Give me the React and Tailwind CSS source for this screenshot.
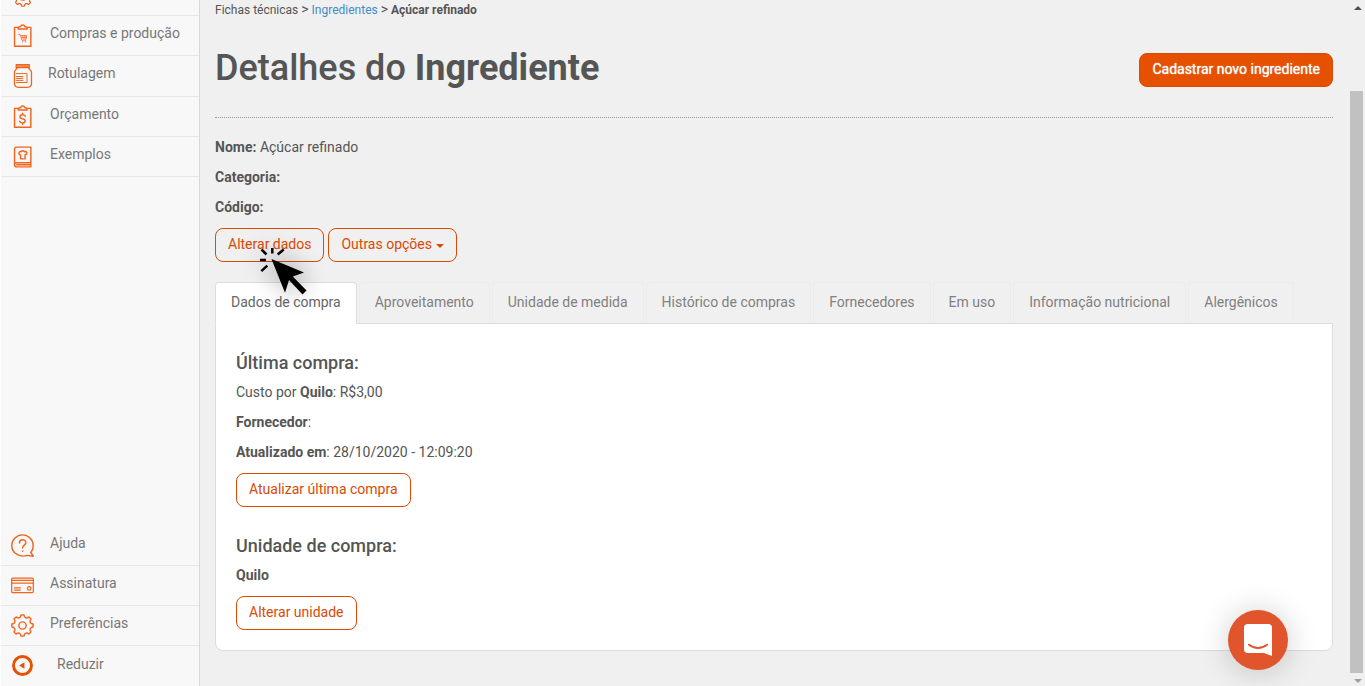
import clsx from 'clsx';

const stroke = {
  fill: 'none',
  stroke: 'currentColor',
  strokeLinecap: 'round',
  strokeLinejoin: 'round',
};

// Eight rounded teeth around a 24x24 box, joined by concave arcs
function gearPath() {
  const point = (radius, degrees) => {
    const rad = (degrees * Math.PI) / 180;
    return `${(12 + radius * Math.cos(rad)).toFixed(2)} ${(12 + radius * Math.sin(rad)).toFixed(2)}`;
  };

  let d = '';
  for (let a = 0; a < 360; a += 45) {
    d += a === 0 ? `M${point(9.4, a - 13)}` : `A2.6 2.6 0 0 0 ${point(9.4, a - 13)}`;
    d += `L${point(11.1, a - 8)}A11 11 0 0 1 ${point(11.1, a + 8)}L${point(9.4, a + 13)}`;
  }
  return `${d}A2.6 2.6 0 0 0 ${point(9.4, -13)}Z`;
}

const GEAR_PATH = gearPath();

function GearIcon({ size = 23 }) {
  return (
    <svg width={size} height={size} viewBox="0 0 24 24" strokeWidth="1.500" {...stroke}>
      <path d={GEAR_PATH} />
      <circle cx="12" cy="12" r="3.800" />
    </svg>
  );
}

function ClipboardIcon({ children }) {
  return (
    <svg width="23" height="23" viewBox="0 0 24 24" strokeWidth="1.500" {...stroke}>
      <path d="M7.500 3.500H3.700v19.800h17V3.500h-3.800" />
      <path d="M7.500 5.200V3.600l2.600-1c.4-2.200 3.700-2.200 4.100 0l2.700 1v1.600z" />
      {children}
    </svg>
  );
}

function CartClipboardIcon() {
  return (
    <ClipboardIcon>
      <path
        d="M8 10.800h1.400l2 6.200h4.200M10.200 12h6.200l-.9 4.200M12.300 12.300l.4 3.700M14.500 12.300V16M11 14h5"
        strokeWidth="1"
        opacity="0.800"
      />
      <path d="M12 18.600h.1M15 18.600h.1" strokeWidth="1.200" />
    </ClipboardIcon>
  );
}

function MoneyClipboardIcon() {
  return (
    <ClipboardIcon>
      <path d="M15 11.600c-.8-1.200-1.800-1.500-2.900-1.500-3.400 0-3.700 3.500-.4 4.200 4.200.7 4 4.400.5 4.400-1.500 0-2.600-.7-3.200-1.700M12.100 8.600v1.500M12.100 18.700v1.500" />
    </ClipboardIcon>
  );
}

function JarIcon() {
  return (
    <svg width="24" height="24" viewBox="0 0 24 24" strokeWidth="1.300" {...stroke}>
      <path d="M5.200.7h13.100v3H5.200zM5.200 2.200h13.100" />
      <path d="M6.200 3.700C5.500 5.500 3.500 6 3.500 8.500v10.800c0 2.700 1.700 4 4 4H16.500c2.300 0 4-1.300 4-4V8.500c0-2.500-2.300-3-3-4.800" />
      <path d="M5.500 9.600H16v8.900H5.500M5.500 12.500h6.500M5.500 14.400h6.500M5.500 16.400h6.500" strokeWidth="1" />
    </svg>
  );
}

function BookIcon() {
  return (
    <svg width="23" height="23" viewBox="0 0 24 24" strokeWidth="1.500" {...stroke}>
      <path d="M20.700 18.500V2.200H6c-1.500 0-2.300.8-2.300 2.300v16c0 1.600.9 2.300 2.300 2.300h14.700v-4.300H6c-1.400 0-2.300.7-2.300 1.700M6 20.700h14" />
      <path d="M10 10.300c-3.100-.5-1.500-4.300.8-3.300.7-1.300 2.500-1.300 3.200 0 2.400-1 3.700 2.800.7 3.300V14.500H10z" />
    </svg>
  );
}

function HelpIcon() {
  return (
    <svg width="23" height="23" viewBox="0 0 24 24" strokeWidth="1.500" {...stroke}>
      <path d="M23.200 23.200l-6.300-.9C10 24.800.8 20.500.8 12.200.8 5.900 5.900.9 12 .9s11.200 5 11.200 11.300c0 3-1 5.200-2.500 7.100z" />
      <path d="M8.800 9.300c0-4.300 6.700-4.200 6.700-.2 0 2.400-3.400 2.700-3.400 5.500M12.100 17.700v.4" />
    </svg>
  );
}

function CardIcon() {
  return (
    <svg width="23" height="23" viewBox="0 0 24 24" strokeWidth="1.300" {...stroke}>
      <rect x=".7" y="4.200" width="22.600" height="15.200" rx="1.200" />
      <path d="M1 6.700h22M1 9.600h22M3.700 14.500h6M3.700 16.700h6" />
      <circle cx="19" cy="15" r="1.800" />
    </svg>
  );
}

function CollapseIcon() {
  return (
    <svg width="23" height="23" viewBox="0 0 24 24">
      <circle cx="12" cy="12" r="9.400" fill="none" stroke="#e65100" strokeWidth="3" />
      <path d="M8.500 12l5.500-3.500v7z" fill="#e65100" />
    </svg>
  );
}

const mainMenu = [
  { label: 'Compras e produção', Icon: CartClipboardIcon },
  { label: 'Rotulagem', Icon: JarIcon, className: 'h-10 gap-3.5' },
  { label: 'Orçamento', Icon: MoneyClipboardIcon },
  { label: 'Exemplos', Icon: BookIcon },
];

const bottomMenu = [
  { label: 'Ajuda', Icon: HelpIcon },
  { label: 'Assinatura', Icon: CardIcon },
  { label: 'Preferências', Icon: GearIcon },
];

const tabs = [
  'Dados de compra',
  'Aproveitamento',
  'Unidade de medida',
  'Histórico de compras',
  'Fornecedores',
  'Em uso',
  'Informação nutricional',
  'Alergênicos',
];

function MenuItem({ label, Icon, className = 'h-[39px] gap-4' }) {
  return (
    <li className="border-b border-[#e7e7e7]">
      <a href="#" className={clsx('flex pl-2.5 text-[#777]', className)}>
        <span className="w-[23px] shrink-0 pt-2 text-[#f0641e]">
          <Icon />
        </span>
        <span className="pt-[7px]">{label}</span>
      </a>
    </li>
  );
}

function Sidebar() {
  return (
    <nav className="flex w-[200px] shrink-0 flex-col justify-between border-l border-r border-l-white border-r-[#d9d9d9] bg-[#f8f8f8]">
      <ul>
        <li className="flex h-4 items-end overflow-hidden border-b border-[#e7e7e7] pb-2 pl-3 text-[#f0641e]">
          <GearIcon size={20} />
        </li>
        {mainMenu.map((item) => (
          <MenuItem key={item.label} {...item} />
        ))}
      </ul>
      <ul>
        {bottomMenu.map((item) => (
          <MenuItem key={item.label} {...item} />
        ))}
        <li>
          <button type="button" className="flex h-10 w-full gap-[23px] pl-2.5 text-[#777]">
            <span className="pt-2">
              <CollapseIcon />
            </span>
            <span className="pt-2">Reduzir</span>
          </button>
        </li>
      </ul>
    </nav>
  );
}

function OutlineButton({ children }) {
  return (
    <button
      type="button"
      className="flex h-[34px] items-center rounded-lg border border-[#d84a05] bg-transparent px-3 pb-0.5 text-[#d84a05]"
    >
      {children}
    </button>
  );
}

function Field({ children }) {
  return <p className="mb-3 leading-[18px]">{children}</p>;
}

function ClickCursor() {
  return (
    <svg
      className="pointer-events-none absolute top-4 left-11 drop-shadow-[0_0_12px_rgba(0,0,0,0.4)]"
      width="50"
      height="52"
      viewBox="0 0 50 52"
    >
      <path d="M2.500 5.500l5 5M13.300 4v5.500M24.700 5.500l-6 5M1 16h6M8.300 21.700l-6 5.500" stroke="#000" strokeWidth="2.500" />
      <path d="M12.500 15L45 28.500l-11.200 4L47.500 46.500l-4 4-13.500-14.500L26 48.700z" fill="#000" />
    </svg>
  );
}

function Tabs() {
  return (
    <div role="tablist" className="flex gap-0.5">
      {tabs.map((tab, i) => (
        <button
          key={tab}
          type="button"
          role="tab"
          aria-selected={i === 0}
          className={clsx(
            'rounded-t border px-[15px] whitespace-nowrap',
            i === 0
              ? '-mb-px h-[42px] border-[#ddd] border-b-white bg-white pb-0.5 text-[#666]'
              : 'h-[41px] border-[#ececec] border-b-transparent bg-[#f0f0f0] pb-px text-[#808080]'
          )}
        >
          {tab}
        </button>
      ))}
    </div>
  );
}

function PurchasePanel() {
  return (
    <section role="tabpanel" className="rounded-b-lg border border-[#ddd] bg-white px-5 pt-7 pb-5">
      <h2 className="mb-[9px] text-lg leading-[22px] font-medium">Última compra:</h2>
      <Field>
        Custo por <b>Quilo</b>: R$3,00
      </Field>
      <Field>
        <b>Fornecedor</b>:
      </Field>
      <Field>
        <b>Atualizado em</b>: 28/10/2020 - 12:09:20
      </Field>
      <OutlineButton>Atualizar última compra</OutlineButton>
      <h2 className="mt-7 mb-[9px] text-lg leading-[22px] font-medium">Unidade de compra:</h2>
      <Field>
        <b>Quilo</b>
      </Field>
      <OutlineButton>Alterar unidade</OutlineButton>
    </section>
  );
}

function ScrollRail() {
  return (
    <div aria-hidden="true" className="flex w-[15px] shrink-0 flex-col items-center pt-[5px] pb-[3px]">
      <svg width="8" height="5" viewBox="0 0 8 5">
        <path d="M0 5l4-4 4 4z" fill="#505050" />
      </svg>
      <div className="mt-[81px] mb-[5px] w-[13px] flex-1 self-start bg-[#c1c1c1]" />
      <svg width="8" height="5" viewBox="0 0 8 5">
        <path d="M0 1l4 4 4-4z" fill="#a0a0a0" />
      </svg>
    </div>
  );
}

function ChatLauncher() {
  return (
    <button
      type="button"
      aria-label="Chat"
      className="fixed right-[77px] bottom-4 flex size-[60px] items-center justify-center rounded-full bg-[#e1552d] shadow-[0_2px_32px_rgba(0,0,0,0.2)]"
    >
      <svg width="28" height="32" viewBox="0 0 28 32">
        <path d="M3.500 0h21c2 0 3.500 1.500 3.500 3.500V32l-8-3H3.500C1.500 29 0 27.500 0 25.500v-22C0 1.500 1.500 0 3.500 0z" fill="#fff" />
        <path d="M5 20.700c5.500 4.300 12.500 4.300 18 0" fill="none" stroke="#e1552d" strokeWidth="2" strokeLinecap="round" />
      </svg>
    </button>
  );
}

export default function App() {
  return (
    <div className="flex h-screen overflow-hidden bg-[#f0f0f0] font-['Roboto',sans-serif] text-sm leading-5 text-[#555]">
      <Sidebar />
      <main className="min-w-0 flex-1 pr-[17px] pl-[15px]">
        <div className="flex h-5 items-baseline gap-[3px] text-xs leading-[18px]">
          <span>Fichas técnicas</span>
          <span className="text-sm leading-[18px]">&gt;</span>
          <a href="#" className="text-[#428bca]">
            Ingredientes
          </a>
          <span className="text-sm leading-[18px]">&gt;</span>
          <b>Açúcar refinado</b>
        </div>
        <header className="mb-5 flex items-start justify-between border-b border-dotted border-[#999] pt-7 pb-[29px]">
          <h1 className="text-4xl leading-10 font-medium">
            Detalhes do <b>Ingrediente</b>
          </h1>
          <button
            type="button"
            className="mt-[5px] h-[34px] rounded-lg border border-[#d84a05] bg-[#e65100] px-3 pb-0.5 text-white text-shadow-[0_0_1px_#fff]"
          >
            Cadastrar novo ingrediente
          </button>
        </header>
        <Field>
          <b>Nome:</b> Açúcar refinado
        </Field>
        <Field>
          <b>Categoria:</b>
        </Field>
        <Field>
          <b>Código:</b>
        </Field>
        <div className="relative mb-5 flex gap-1">
          <OutlineButton>Alterar dados</OutlineButton>
          <OutlineButton>
            Outras opções
            <span className="mt-1 ml-1 border-x-4 border-t-4 border-x-transparent border-t-[#d84a05]" />
          </OutlineButton>
          <ClickCursor />
        </div>
        <Tabs />
        <PurchasePanel />
      </main>
      <ScrollRail />
      <ChatLauncher />
    </div>
  );
}
